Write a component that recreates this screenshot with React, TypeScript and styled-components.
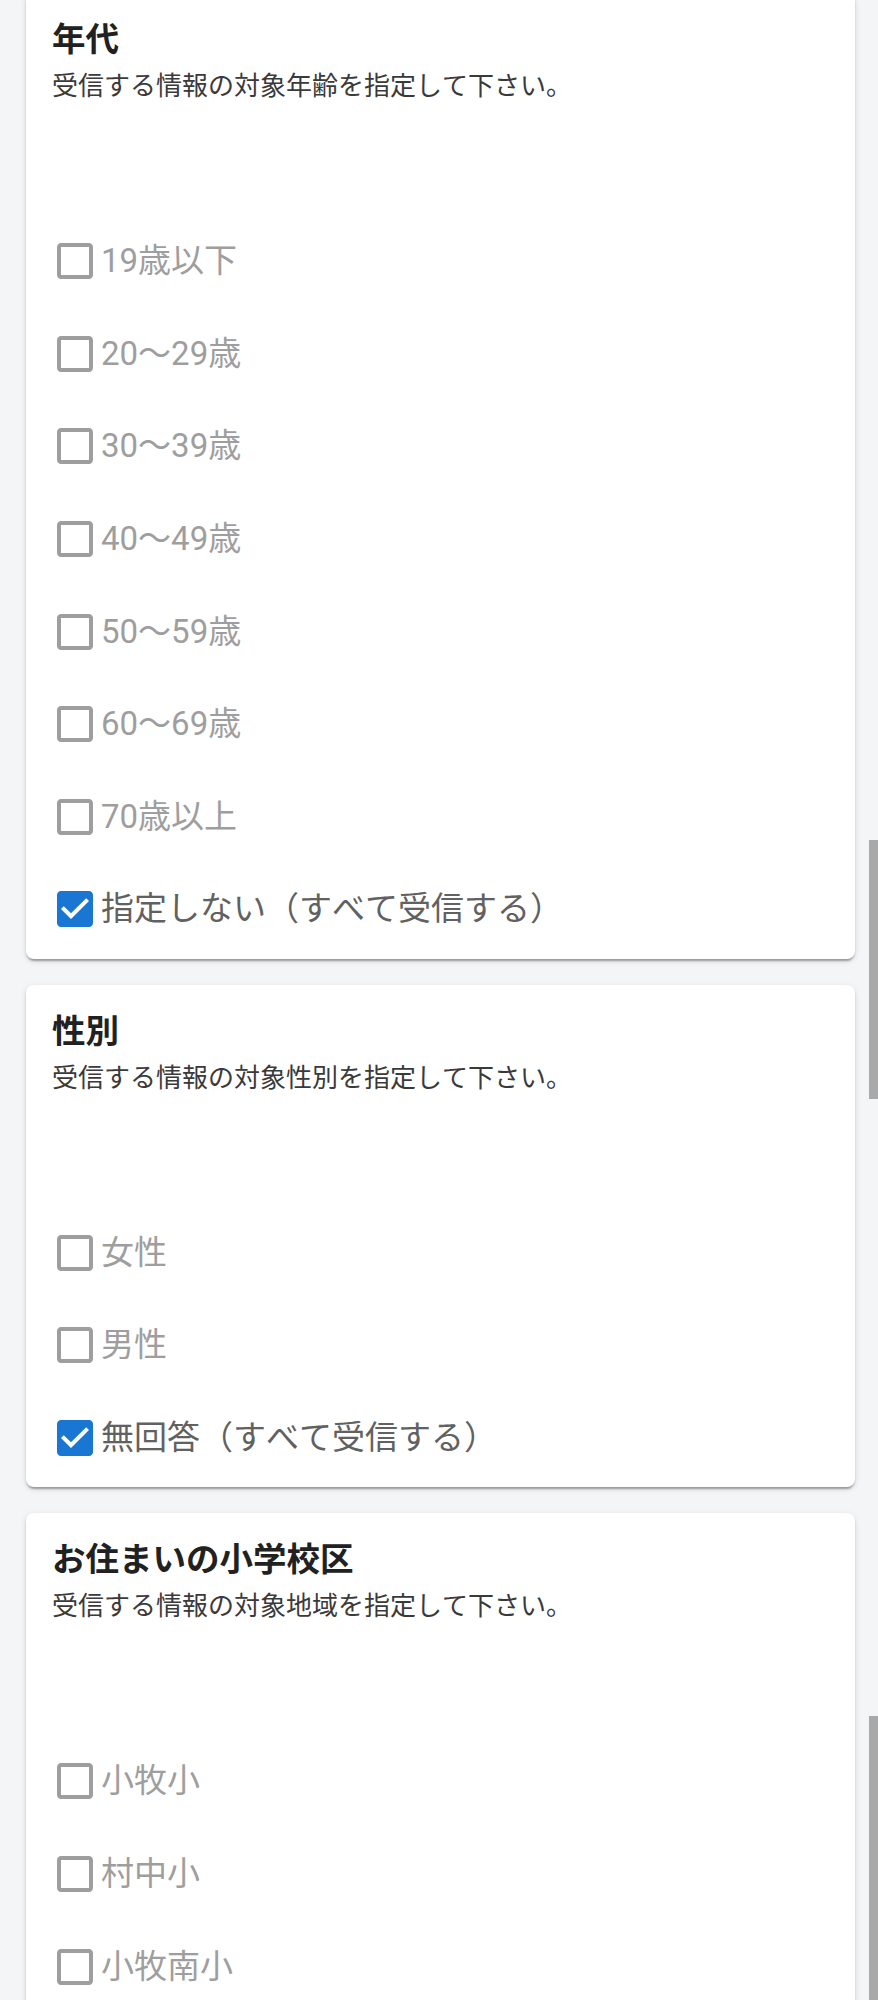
import React from "react";
import styled, { createGlobalStyle } from "styled-components";

const GlobalStyle = createGlobalStyle`
	html, body {
		margin: 0;
		padding: 0;
		background: #f4f5f7;
	}
	body {
		font-family: Roboto, "Noto Sans CJK JP", sans-serif;
		font-kerning: none;
		text-spacing-trim: space-all;
		overflow: hidden;
	}
`;

type Option = { label: string; checked?: boolean };
type Section = { title: string; note: string; options: Option[] };

const sections: Section[] = [
	{
		title: "年代",
		note: "受信する情報の対象年齢を指定して下さい。",
		options: [
			{ label: "19歳以下" },
			{ label: "20～29歳" },
			{ label: "30～39歳" },
			{ label: "40～49歳" },
			{ label: "50～59歳" },
			{ label: "60～69歳" },
			{ label: "70歳以上" },
			{ label: "指定しない（すべて受信する）", checked: true },
		],
	},
	{
		title: "性別",
		note: "受信する情報の対象性別を指定して下さい。",
		options: [
			{ label: "女性" },
			{ label: "男性" },
			{ label: "無回答（すべて受信する）", checked: true },
		],
	},
	{
		title: "お住まいの小学校区",
		note: "受信する情報の対象地域を指定して下さい。",
		options: [{ label: "小牧小" }, { label: "村中小" }, { label: "小牧南小" }],
	},
];

const BoxIcon: React.FC<{ checked?: boolean }> = ({ checked }) =>
	checked ? (
		<svg width='48' height='48' viewBox='0 0 24 24'>
			<path fill='#1976d2' d='M19 3H5c-1.11 0-2 .9-2 2v14c0 1.1.89 2 2 2h14c1.11 0 2-.9 2-2V5c0-1.1-.89-2-2-2z' />
			<path fill='#fff' d='M10 17l-5-5 1.41-1.41L10 14.17l7.59-7.59L19 8z' />
		</svg>
	) : (
		<svg width='48' height='48' viewBox='0 0 24 24'>
			<path
				fill='#9e9e9e'
				d='M19 5v14H5V5h14m0-2H5c-1.1 0-2 .9-2 2v14c0 1.1.9 2 2 2h14c1.1 0 2-.9 2-2V5c0-1.1-.9-2-2-2z'
			/>
		</svg>
	);

const App: React.FC = () => {
	return (
		<Page>
			<GlobalStyle />
			<List>
				{sections.map((s) => (
					<Card key={s.title}>
						<Title>{s.title}</Title>
						<Note>{s.note}</Note>
						<Spacer />
						<Group>
							{s.options.map((o) => (
								<Row key={o.label}>
									<BoxIcon checked={o.checked} />
									<Label checked={o.checked}>{o.label}</Label>
								</Row>
							))}
						</Group>
					</Card>
				))}
			</List>
			<Thumb top={840} height={259} />
			<Thumb top={1716} height={300} />
		</Page>
	);
};
export default App;

const Page = styled.div`
	position: relative;
	width: 878px;
	height: 2000px;
	overflow: hidden;
	background: #f4f5f7;
`;

const List = styled.div`
	display: flex;
	flex-direction: column;
	gap: 26px;
	margin-top: -7px;
	padding: 0 23px 0 26px;
`;

const Card = styled.div`
	display: flex;
	flex-direction: column;
	background: #fff;
	border-radius: 8px;
	padding: 23px 26px 3px;
	box-shadow: 0 4px 2px -2px rgba(0, 0, 0, 0.2), 0 2px 2px 0 rgba(0, 0, 0, 0.14), 0 2px 6px 0 rgba(0, 0, 0, 0.12);
`;

const Title = styled.div`
	font-size: 33.5px;
	font-weight: 700;
	line-height: 48px;
	color: #212121;
`;

const Note = styled.div`
	margin-top: 4px;
	font-size: 26px;
	line-height: 37px;
	color: #3a3a3a;
`;

const Spacer = styled.div`
	height: 110px;
`;

const Group = styled.div`
	display: flex;
	flex-direction: column;
	margin-left: -1px;
`;

const Row = styled.div`
	display: flex;
	align-items: center;
	height: 92.57px;
	svg {
		flex-shrink: 0;
	}
`;

const Label = styled.span<{ checked?: boolean }>`
	margin-left: 2px;
	font-size: 33px;
	line-height: 40px;
	white-space: nowrap;
	color: ${(p) => (p.checked ? "#616161" : "#9e9e9e")};
`;

const Thumb = styled.div<{ top: number; height: number }>`
	position: absolute;
	right: 0;
	top: ${(p) => p.top}px;
	width: 9px;
	height: ${(p) => p.height}px;
	background: #a9a9a9;
`;
